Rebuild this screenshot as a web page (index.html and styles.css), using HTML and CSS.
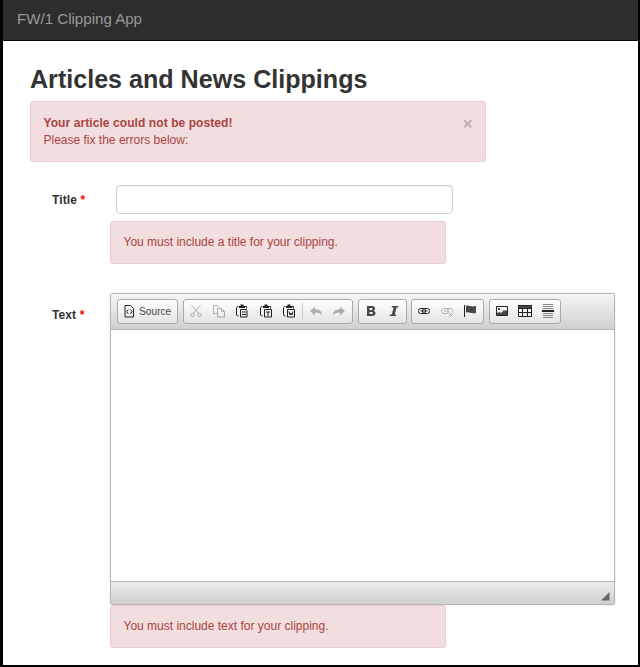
FILE: index.html
```
<!DOCTYPE html>
<html lang="en">
<head>
<meta charset="utf-8">
<title>FW/1 Clipping App</title>
<link rel="stylesheet" href="styles.css">
</head>
<body>
<div class="page">
  <nav class="navbar"><span class="brand">FW/1 Clipping App</span></nav>
  <main class="content">
    <h1>Articles and News Clippings</h1>
    <div class="alert summary">
      <div><strong>Your article could not be posted!</strong><br><span>Please fix the errors below:</span></div>
      <svg class="close" width="10" height="10" viewBox="0 0 10 10"><path d="M1.200 1.200l7.200 7.200M8.400 1.200L1.200 8.400"/></svg>
    </div>
    <div class="row title-row">
      <label for="title">Title <span class="req">*</span></label>
      <div class="field">
        <input id="title" type="text">
        <div class="alert">You must include a title for your clipping.</div>
      </div>
    </div>
    <div class="row text-row">
      <label>Text <span class="req">*</span></label>
      <div class="field">
        <div class="editor">
          <div class="toolbar">
            <div class="group g-source">
              <svg class="i" viewBox="0 0 16 16"><path class="s" d="M4 2.500h5.500l3 3v8.500H4z" stroke-width="1.300"/><path class="s" d="M7.200 6.500L5.500 8.700l1.700 2.200M9.300 6.500L11 8.700l-1.700 2.200" stroke-width="1.500"/></svg>
              <span>Source</span>
            </div>
            <div class="group g-clip">
              <b class="off"><svg class="i" viewBox="0 0 16 16"><path class="s" d="M3.500 2l7.500 9M12.500 2L5 11" stroke-width="2.200"/><circle class="s" cx="4.500" cy="12" r="1.700" stroke-width="1.500"/><circle class="s" cx="11.500" cy="12" r="1.700" stroke-width="1.500"/></svg></b>
              <b class="off"><svg class="i" viewBox="0 0 16 16"><path class="s" d="M6 10.500H2.500v-8h4l2 2M6.500 5.500h4l3 3v5.500h-7zM10.500 5.500v3h3" stroke-width="1.200"/></svg></b>
              <b><svg class="i" viewBox="0 0 16 16"><path class="s" d="M4.500 3.500h-1l-1 1v7.500l1 1h1M10.500 3.500h2v2"/><path d="M5 3h1.500V1.500h3V3H11v2H5z"/><path class="s" d="M6.500 6.500h6l.5 1v6.500H6.500zM8 9h4M8 11.500h4" stroke-width="1.200"/></svg></b>
              <b><svg class="i" viewBox="0 0 16 16"><path class="s" d="M4.500 3.500h-1l-1 1v7.500l1 1h1M10.500 3.500h2v2"/><path d="M5 3h1.500V1.500h3V3H11v2H5z"/><path class="s" d="M6.500 6.500h7v7.500h-7zM8 9h4M10 9v4" stroke-width="1.200"/></svg></b>
              <b><svg class="i" viewBox="0 0 16 16"><path class="s" d="M4.500 3.500h-1l-1 1v7.500l1 1h1M10.500 3.500h2v2"/><path d="M5 3h1.500V1.500h3V3H11v2H5z"/><path class="s" d="M6.500 6.500h7v7.500h-7zM8 8.500l1 3.500 1-2 1 2 1-3.500" stroke-width="1.200"/></svg></b>
              <i class="sep"></i>
              <b class="off"><svg class="i" viewBox="0 0 16 16"><path d="M2 8l5-4.500v2.700c4 0 6.500 1.500 7 5.800-2-2-4-2.500-7-2.300v2.800z"/></svg></b>
              <b class="off"><svg class="i" viewBox="0 0 16 16"><path d="M14 8L9 3.500v2.700c-4 0-6.500 1.500-7 5.800 2-2 4-2.500 7-2.300v2.800z"/></svg></b>
            </div>
            <div class="group g-style">
              <b><svg class="i" viewBox="0 0 16 16"><path class="g" fill-rule="evenodd" d="M4 3h5c3.800 0 3.800 4 1.500 4.700 3.200.8 2.500 5.300-1.300 5.300H4zM6.500 5v2h2c1.500 0 1.500-2 0-2zM6.500 9v2h2.200c1.600 0 1.600-2 0-2z"/></svg></b>
              <b><svg class="i" viewBox="0 0 16 16"><path class="g" d="M6 3h6.500l-.4 1.500h-1.500L8.700 11.500h1.500L9.800 13H3.500l.4-1.500h1.900l1.800-7H5.600z"/></svg></b>
            </div>
            <div class="group g-link">
              <b><svg class="i" viewBox="0 0 16 16"><rect class="s" x="2.500" y="5.500" width="7" height="5" rx="2" stroke-width="1.200"/><rect class="s" x="6.500" y="5.500" width="7" height="5" rx="2" stroke-width="1.200"/><path class="s" d="M4.500 8h7" stroke-width="1.500"/></svg></b>
              <b class="off"><svg class="i" viewBox="0 0 16 16"><path class="s" d="M8 10.500H5C1.700 10.500 1.700 5.500 5 5.500h6c2.500 0 3 1.500 2.600 3M5 8h5M7 5.500c3 0 3 4 1 5M9.500 9.500l4 4M13.500 9.500l-4 4" stroke-width="1.400"/></svg></b>
              <b><svg class="i" viewBox="0 0 16 16"><path class="s" d="M2.500 2v12"/><path class="g" d="M4 3c3-1.500 4 1.500 10 0v7c-5 1-7-1.500-10-.5z"/></svg></b>
            </div>
            <div class="group g-insert">
              <b><svg class="i" viewBox="0 0 16 16"><path class="s" d="M2.500 3.500h11v9h-11z"/><path class="g" d="M3 12v-2l2-1 2 1 3-3 1 1 1-1 1 1v4zM4 5h2v2H4z"/></svg></b>
              <b><svg class="i" viewBox="0 0 16 16"><path class="g" d="M1 2h14v3H1z"/><path class="s" d="M1.500 2.500h13v11h-13zM1.500 9.500h13M5.500 5v8.500M10.500 5v8.500M1.500 5.500h13"/></svg></b>
              <b><svg class="i" viewBox="0 0 16 16"><path class="h" d="M3 1.500h10M3 3.500h10M3 5.500h10M3 10.500h10M3 12.500h10M3 14.500h10"/><path d="M2 7h12v2H2z"/></svg></b>
            </div>
          </div>
          <div class="area"></div>
          <div class="bottom"><svg width="9" height="9" viewBox="0 0 9 9"><path d="M8.500 0v8.500H0z"/></svg></div>
        </div>
        <div class="alert">You must include text for your clipping.</div>
      </div>
    </div>
  </main>
</div>
</body>
</html>
```
FILE: styles.css
```
* { box-sizing: border-box; }
body { margin: 0; font: 12px/17px "Liberation Sans", Arial, sans-serif; color: #333; }
.page { height: 667px; overflow: hidden; background: #fff; border: solid #000; border-width: 0 2px 2px 3px; }
.navbar { height: 41px; padding: 10px 14px; background: #2d2d2d; border-bottom: 1px solid #080808; color: #999; font-size: 15.1px; line-height: 18px; }
.content { padding: 24px 22px 0 27px; }
h1 { margin: 0; height: 36px; font-size: 25.1px; line-height: 28px; white-space: nowrap; }
.alert { width: 336px; height: 43px; padding: 12px 12.5px; background: #f2dede; border: 1px solid #ebccd1; border-radius: 3px; color: #a94442; white-space: nowrap; }
.summary { display: flex; justify-content: space-between; width: 456px; height: 61px; padding-top: 13px; }
.summary strong { letter-spacing: .08px; }
.close { margin: 4px 0 0; stroke: #c0b0b0; stroke-width: 2; fill: none; }
.row { display: flex; }
.row label { width: 80px; padding-left: 22px; font-weight: bold; letter-spacing: .1px; white-space: nowrap; }
.req { color: #f00; }
.title-row { margin-top: 23px; height: 108px; }
.title-row label { padding-top: 7px; }
.title-row .alert { margin-top: 7px; }
input { display: block; width: 337px; height: 29px; margin-left: 6px; border: 1px solid #ccc; border-radius: 4px; box-shadow: inset 0 1px 1px rgba(0,0,0,.075); }
.text-row label { padding-top: 14px; }
.editor { width: 505px; height: 312px; border: 1px solid #b6b6b6; border-radius: 2px; box-shadow: 0 0 2px rgba(0,0,0,.15); }
.toolbar { display: flex; height: 36px; padding: 5px 6px; background: linear-gradient(#f5f5f5, #cfd1cf); border-bottom: 1px solid #b6b6b6; }
.group { display: flex; align-items: center; height: 25px; padding: 0 1px 1px 0; margin-right: 5px; border: 1px solid #aaa; border-radius: 3px; background: linear-gradient(#fff, #e4e4e4); }
.g-source { width: 61px; padding-left: 3px; gap: 2px; font-size: 10.2px; color: #474747; }
.g-clip { width: 170px; }
.g-style { width: 49px; margin-right: 4px; }
.g-link { width: 73px; }
.g-insert { width: 72px; margin-right: 0; }
.group b { display: flex; justify-content: center; flex: 0 0 23.4px; }
.sep { width: 1px; height: 16px; margin: 0 2px 0 1px; background: #ccc; }
.i { display: block; flex: none; width: 16px; height: 16px; fill: #222; }
.s { fill: none; stroke: #222; stroke-width: 1; }
.g { fill: #484848; }
.h { fill: none; stroke: #888; }
.off { opacity: .32; }
.area { height: 251px; background: #fff; }
.bottom { display: flex; justify-content: flex-end; align-items: flex-end; height: 23px; padding: 0 4px 3px; border-top: 1px solid #b6b6b6; background: linear-gradient(#ebebeb, #cfd1cf); }
.bottom svg { fill: #666; }
```
